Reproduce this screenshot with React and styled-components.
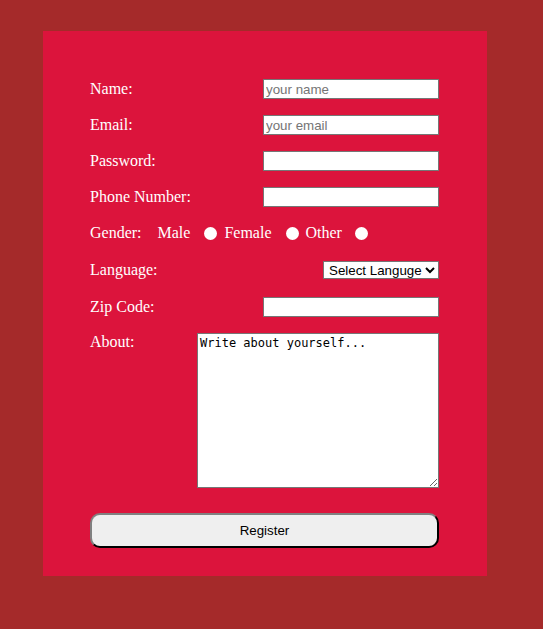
import React from 'react';
import styled, { createGlobalStyle } from 'styled-components';

const GlobalStyle = createGlobalStyle`
  body {
    margin: 0;
    background: #a52a2a;
    font-family: "Liberation Serif", "Times New Roman", serif;
  }
`;

const Page = styled.div`
  min-height: 629px;
  padding: 31px 0 0 43px;
  box-sizing: border-box;
`;

const Card = styled.form`
  width: 444px;
  height: 545px;
  box-sizing: border-box;
  background: #dc143c;
  padding: 48px 48px 0 47px;
  display: flex;
  flex-direction: column;
  gap: 16px;
`;

const Row = styled.div`
  display: flex;
  align-items: ${(p) => (p.$top ? 'flex-start' : 'center')};
  justify-content: space-between;
  min-height: ${(p) => p.$h || 20}px;
`;

const Label = styled.label`
  color: #fff;
  font-size: 16px;
  line-height: ${(p) => (p.$top ? '18px' : '20px')};
  padding-top: ${(p) => (p.$top ? '0px' : '0')};
`;

const TextInput = styled.input`
  width: 176px;
  height: 20px;
  box-sizing: border-box;
  border: 1px solid #767676;
  padding: 1px 2px;
  font-family: "Liberation Sans", Arial, sans-serif;
  font-size: 13.33px;
  background: #fff;
  &::placeholder {
    color: #757575;
  }
`;

const GenderGroup = styled.div`
  display: flex;
  align-items: center;
  color: #fff;
  font-size: 16px;
  line-height: 20px;
`;

const Option = styled.span`
  margin-left: ${(p) => p.$gap}px;
`;

const Radio = styled.input.attrs({ type: 'radio' })`
  appearance: none;
  width: 13px;
  height: 13px;
  margin: 0 0 0 ${(p) => p.$gap}px;
  border-radius: 50%;
  background: #fff;
  border: none;
`;

const Select = styled.select`
  height: 18px;
  width: 116px;
  box-sizing: border-box;
  border: 1px solid #767676;
  font-family: "Liberation Sans", Arial, sans-serif;
  font-size: 13.33px;
  background: #fff;
  color: #000;
  padding: 0 0 0 1px;
`;

const TextArea = styled.textarea`
  width: 242px;
  height: 155px;
  box-sizing: border-box;
  border: 1px solid #767676;
  padding: 2px;
  font-family: "DejaVu Sans Mono", "Liberation Mono", monospace;
  font-size: 12px;
  color: #000;
`;

const Button = styled.button`
  margin-top: 9px;
  width: 349px;
  height: 35px;
  border: 2px outset #767676;
  border-color: #808080 #1a1a1a #1a1a1a #808080;
  border-radius: 10px;
  background: #efefef;
  font-family: "Liberation Sans", Arial, sans-serif;
  font-size: 13.33px;
  color: #000;
`;

export default function App() {
  return (
    <Page>
      <GlobalStyle />
      <Card onSubmit={(e) => e.preventDefault()}>
        <Row>
          <Label>Name:</Label>
          <TextInput placeholder="your name" />
        </Row>
        <Row>
          <Label>Email:</Label>
          <TextInput type="email" placeholder="your email" />
        </Row>
        <Row>
          <Label>Password:</Label>
          <TextInput type="password" />
        </Row>
        <Row>
          <Label>Phone Number:</Label>
          <TextInput type="tel" />
        </Row>
        <Row>
          <GenderGroup>
            <Label>Gender:</Label>
            <Option $gap={16}>Male</Option>
            <Radio name="gender" $gap={14} />
            <Option $gap={7}>Female</Option>
            <Radio name="gender" $gap={14} />
            <Option $gap={7}>Other</Option>
            <Radio name="gender" $gap={13} />
          </GenderGroup>
        </Row>
        <Row $h={22}>
          <Label>Language:</Label>
          <Select defaultValue="">
            <option value="">Select Languge</option>
            <option>English</option>
            <option>Hindi</option>
          </Select>
        </Row>
        <Row>
          <Label>Zip Code:</Label>
          <TextInput />
        </Row>
        <Row $top>
          <Label $top>About:</Label>
          <TextArea defaultValue="Write about yourself..." />
        </Row>
        <Button type="submit">Register</Button>
      </Card>
    </Page>
  );
}
